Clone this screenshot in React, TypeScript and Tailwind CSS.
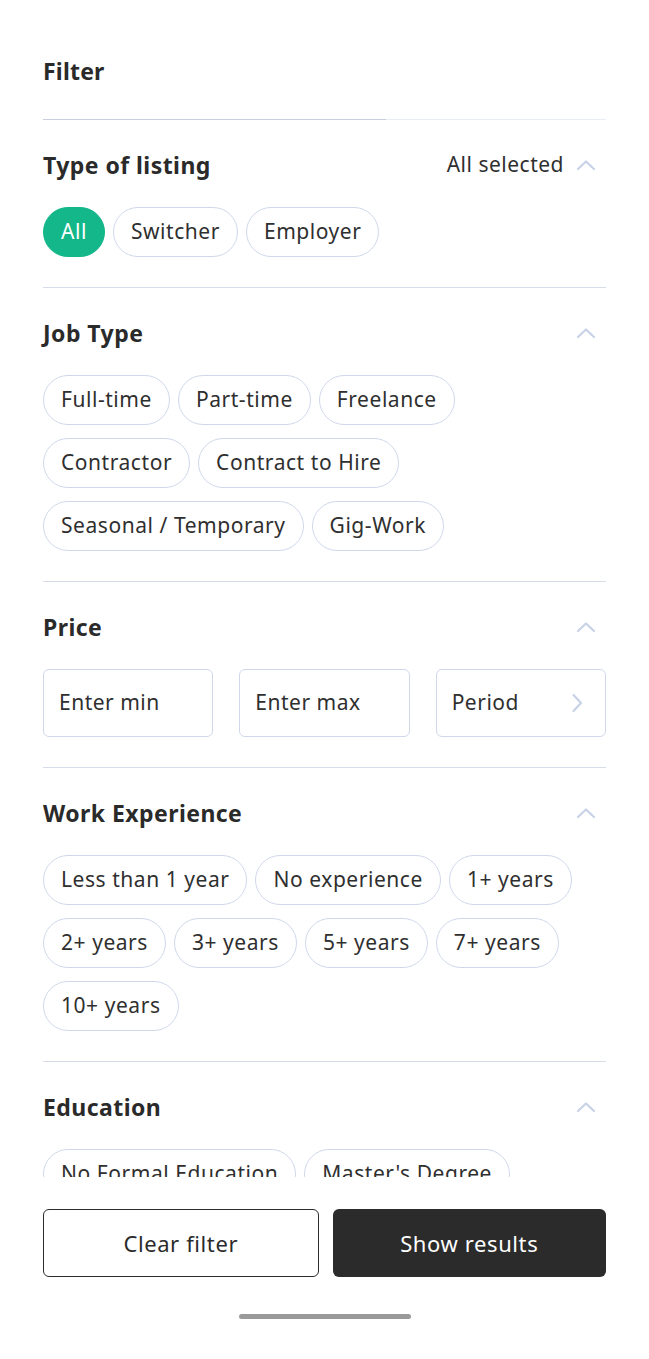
import type { ReactNode } from 'react'

const font = { fontFamily: '"Noto Sans", "Open Sans", sans-serif' }

function ChevronUp() {
  return (
    <svg width="20" height="12" viewBox="0 0 20 12" fill="none">
      <path d="M2 10L10 2.5L18 10" stroke="#c8d2e6" strokeWidth="2.2" strokeLinecap="round" strokeLinejoin="round" />
    </svg>
  )
}

function ChevronRight() {
  return (
    <svg width="12" height="20" viewBox="0 0 12 20" fill="none">
      <path d="M2.5 2L10 10L2.5 18" stroke="#c8d2e6" strokeWidth="2.2" strokeLinecap="round" strokeLinejoin="round" />
    </svg>
  )
}

function Chip({ label, active }: { label: string; active?: boolean }) {
  return (
    <span
      className={`h-[50px] px-[17px] rounded-full inline-flex items-center text-[21px] tracking-[0.55px] ${
        active ? 'bg-[#13b789] text-white border-[1.5px] border-[#13b789]' : 'border-[1.5px] border-[#cfd8ea] text-[#2f2f2f]'
      }`}
    >
      {label}
    </span>
  )
}

function Section({ title, right, children, last }: { title: string; right?: ReactNode; children: ReactNode; last?: boolean }) {
  return (
    <div className={`pt-[30px] pb-[30px] ${last ? '' : 'border-b border-[#d6dcea]'}`}>
      <div className="h-[30px] flex items-center justify-between mb-[27px]">
        <h2 className="text-[23px] tracking-[0.45px] font-bold text-[#2a2a2a]">{title}</h2>
        <div className="flex items-center gap-3 pr-[10px]">
          {right && <span className="text-[21px] tracking-[0.5px] text-[#2f2f2f]">{right}</span>}
          <ChevronUp />
        </div>
      </div>
      {children}
    </div>
  )
}

function Chips({ items, active }: { items: string[]; active?: string }) {
  return (
    <div className="flex flex-wrap gap-x-[8px] gap-y-[13px]">
      {items.map(i => (
        <Chip key={i} label={i} active={i === active} />
      ))}
    </div>
  )
}

export default function App() {
  return (
    <div className="h-[1359px] w-[649px] bg-white flex flex-col overflow-hidden" style={font}>
      <div className="flex-1 overflow-hidden px-[43px] min-h-0">
        <div className="pt-[56px] pb-[33px] h-[119px]">
          <h1 className="text-[23px] leading-[30px] tracking-[0.2px] font-bold text-[#2a2a2a]">Filter</h1>
        </div>
        <div className="flex h-px">
          <div className="w-[343px] bg-[#c9cfe0]" />
          <div className="flex-1 bg-[#e9edf5]" />
        </div>

        <Section title="Type of listing" right="All selected">
          <Chips items={['All', 'Switcher', 'Employer']} active="All" />
        </Section>

        <Section title="Job Type">
          <Chips items={['Full-time', 'Part-time', 'Freelance', 'Contractor', 'Contract to Hire', 'Seasonal / Temporary', 'Gig-Work']} />
        </Section>

        <Section title="Price">
          <div className="grid grid-cols-3 gap-[26px]">
            {['Enter min', 'Enter max'].map(p => (
              <div key={p} className="h-[68px] rounded-[6px] border-[1.5px] border-[#cfd8ea] flex items-center px-[15px] text-[21px] tracking-[0.5px] text-[#2f2f2f]">
                {p}
              </div>
            ))}
            <div className="h-[68px] rounded-[6px] border-[1.5px] border-[#cfd8ea] flex items-center justify-between pl-[15px] pr-[22px] text-[21px] tracking-[0.5px] text-[#2f2f2f]">
              Period
              <ChevronRight />
            </div>
          </div>
        </Section>

        <Section title="Work Experience">
          <Chips items={['Less than 1 year', 'No experience', '1+ years', '2+ years', '3+ years', '5+ years', '7+ years', '10+ years']} />
        </Section>

        <Section title="Education" last>
          <Chips items={['No Formal Education', "Master's Degree"]} />
        </Section>
      </div>

      <div className="bg-white px-[43px] pt-[32px] h-[182px] shrink-0 flex flex-col">
        <div className="flex gap-[14px]">
          <button className="flex-1 h-[68px] rounded-[6px] border-[1.5px] border-[#2b2b2b] bg-white text-[22px] tracking-[0.6px] text-[#2b2b2b]">
            Clear filter
          </button>
          <button className="flex-1 h-[68px] rounded-[6px] bg-[#2b2b2b] text-[22px] tracking-[0.6px] text-white">
            Show results
          </button>
        </div>
        <div className="mt-[37px] mx-auto w-[172px] h-[5px] rounded-full bg-[#9a9a9a]" />
      </div>
    </div>
  )
}
